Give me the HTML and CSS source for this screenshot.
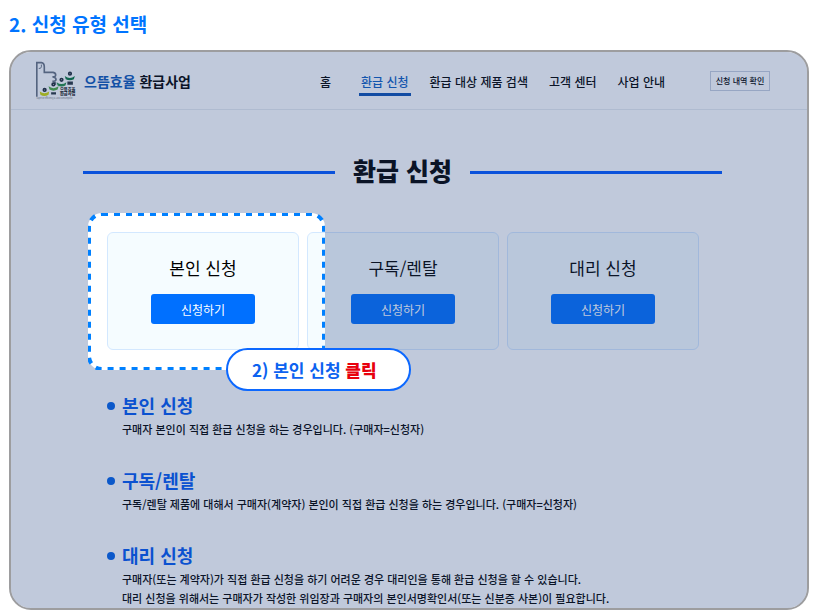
FILE: index.html
```html
<!DOCTYPE html>
<html lang="ko">
<head>
    <meta charset="UTF-8">
    <meta name="viewport" content="width=device-width, initial-scale=1.0">
    <title>신청 유형 선택</title>
    <link rel="stylesheet" href="styles.css">
</head>
<body>

    <h1 class="step-title">2. 신청 유형 선택</h1>

    <div class="screen">
        <header class="header">
            <a href="#" class="brand">
                <svg class="brand-logo" viewBox="18 18 122 120" aria-hidden="true">
                    <!-- Hand -->
                    <path d="M20 128V23H34Q43 24 43 36V53H70Q79 55 78 62Q77 67 68 67M70 67Q80 69 79 76Q77 81 68 80M72 81Q79 84 77 91" fill="none" stroke="#68717f" stroke-width="5"/>
                    <path d="M34 29V36Q33 42 26 41" fill="none" stroke="#68717f" stroke-width="3"/>
                    <!-- People -->
                    <path d="M29 112Q43 123 58 112L56 122Q43 130 31 122Z" fill="#d0d800"/>
                    <path d="M56 96Q71 107 87 96L84 106Q71 113 59 106Z" fill="#4ba63d"/>
                    <path d="M81 83Q96 95 111 83L108 93Q96 100 84 93Z" fill="#218b43"/>
                    <path d="M106 64Q122 76 137 64L134 74Q122 81 109 74Z" fill="#08743a"/>
                    <g fill="none" stroke="#202a35" stroke-width="5">
                        <circle cx="44" cy="107" r="4"/>
                        <circle cx="71" cy="90" r="4"/>
                        <circle cx="96" cy="76" r="4"/>
                        <circle cx="122" cy="57" r="4"/>
                    </g>
                    <path d="M64 114H79V121H64ZM114 81H131V91H114Z" fill="#28343c"/>
                    <text x="91" y="110" class="logo-name">으뜸효율</text>
                    <text x="91" y="124" class="logo-name">환급사업</text>
                    <text x="19" y="136" class="logo-caption">Superior Efficiency &amp; Low Consumption</text>
                </svg>
                <span class="brand-name"><em>으뜸효율</em> 환급사업</span>
            </a>
            <nav class="nav">
                <a href="#" class="home">홈</a>
                <a href="#" class="active">환급 신청</a>
                <a href="#">환급 대상 제품 검색</a>
                <a href="#">고객 센터</a>
                <a href="#">사업 안내</a>
            </nav>
            <button type="button" class="history-btn">신청 내역 확인</button>
        </header>

        <main class="main">
            <h2 class="page-title">환급 신청</h2>

            <div class="cards">
                <div class="card">
                    <h3>본인 신청</h3>
                    <button type="button">신청하기</button>
                </div>
                <div class="card">
                    <h3>구독/렌탈</h3>
                    <button type="button">신청하기</button>
                </div>
                <div class="card">
                    <h3>대리 신청</h3>
                    <button type="button">신청하기</button>
                </div>

                <!-- Spotlight on the first card, everything else is dimmed -->
                <div class="spotlight">
                    <svg aria-hidden="true"><rect class="dashes"/></svg>
                </div>
                <div class="callout">2) 본인 신청 <strong>클릭</strong></div>
            </div>

            <ul class="types">
                <li>
                    <h3>본인 신청</h3>
                    <p>구매자 본인이 직접 환급 신청을 하는 경우입니다. (구매자=신청자)</p>
                </li>
                <li>
                    <h3>구독/렌탈</h3>
                    <p>구독/렌탈 제품에 대해서 구매자(계약자) 본인이 직접 환급 신청을 하는 경우입니다. (구매자=신청자)</p>
                </li>
                <li>
                    <h3>대리 신청</h3>
                    <p>구매자(또는 계약자)가 직접 환급 신청을 하기 어려운 경우 대리인을 통해 환급 신청을 할 수 있습니다.<br>대리 신청을 위해서는 구매자가 작성한 위임장과 구매자의 본인서명확인서(또는 신분증 사본)이 필요합니다.</p>
                </li>
            </ul>
        </main>
    </div>

</body>
</html>
```
FILE: styles.css
```css
* {
    box-sizing: border-box;
}

body {
    margin: 0;
    padding: 9px 5px 5px 9px;
    background: #fff;
    color: #000;
    font-family: "Noto Sans CJK KR", "Noto Sans", sans-serif;
}

h1, h2, h3, p, ul {
    margin: 0;
    padding: 0;
}

a {
    color: inherit;
    text-decoration: none;
}

button {
    font-family: inherit;
    padding: 0;
    cursor: pointer;
}

.step-title {
    margin-bottom: 11px;
    font-size: 19px;
    line-height: 30px;
    font-weight: 700;
    color: #0074ff;
}

/* overflow keeps the dimming inside the rounded frame */
.screen {
    border: 2px solid #9d9d9f;
    border-radius: 22px;
    overflow: hidden;
}

/* Header */
.header {
    display: flex;
    align-items: center;
    height: 58px;
    padding: 0 37px 0 25px;
    border-bottom: 1px solid #e7ebf0;
}

.brand {
    display: flex;
    align-items: center;
    gap: 8px;
}

.brand-logo {
    width: 40px;
    height: 39px;
}

.logo-name {
    font-size: 13px;
    font-weight: 700;
}

.logo-caption {
    font-size: 6px;
    fill: #777;
}

.brand-name {
    font-size: 14px;
    font-weight: 700;
    white-space: nowrap;
}

.brand-name em {
    font-style: normal;
    color: #0b55b5;
}

.nav {
    display: flex;
    gap: 17px;
    margin-left: auto;
    font-size: 12px;
    line-height: 22px;
    font-weight: 500;
    white-space: nowrap;
}

.nav a {
    padding: 5px 2px 0;
    border-bottom: 3px solid transparent;
}

.nav .home {
    margin-right: 9px;
}

.nav .active {
    color: #0b5cc0;
    border-color: #0b50b0;
}

.history-btn {
    width: 60px;
    height: 20px;
    margin-left: 43px;
    background: none;
    border: 1px solid #c5cedd;
    font-size: 8px;
    font-weight: 500;
    white-space: nowrap;
}

/* Content */
.main {
    padding: 42px 85px 0 72px;
}

.page-title {
    display: flex;
    align-items: center;
    gap: 18px;
    font-size: 25px;
    line-height: 36px;
    font-weight: 900;
}

.page-title::before,
.page-title::after {
    content: "";
    flex: 1;
    height: 3px;
    margin-top: 4px;
    background: #0058ff;
}

.cards {
    position: relative;
    display: grid;
    grid-template-columns: repeat(3, 1fr);
    gap: 8px;
    margin: 44px 23px 0 24px;
}

.card {
    height: 118px;
    padding-top: 22px;
    border: 1px solid #d3e8ff;
    border-radius: 6px;
    background: #f5fcff;
    text-align: center;
}

.card h3 {
    font-size: 17px;
    line-height: 26px;
    font-weight: 400;
}

.card button {
    width: 104px;
    height: 30px;
    margin-top: 13px;
    border: 0;
    border-radius: 3px;
    background: #0070ff;
    color: #fff;
    font-size: 12px;
}

.spotlight {
    position: absolute;
    top: -19px;
    left: -19px;
    width: 237px;
    height: 157px;
    border-radius: 14px;
    box-shadow: 0 0 0 2000px rgba(37, 68, 130, 0.29);
    pointer-events: none;
}

.spotlight svg {
    display: block;
    width: 100%;
    height: 100%;
}

.dashes {
    x: 1px;
    y: 1px;
    width: calc(100% - 2px);
    height: calc(100% - 2px);
    rx: 13px;
    fill: none;
    stroke: #0080ff;
    stroke-width: 4;
    stroke-dasharray: 6 6;
}

.callout {
    position: absolute;
    top: 116px;
    left: 119px;
    width: 185px;
    border: 2px solid #0c68ff;
    border-radius: 22px;
    background: #fff;
    padding-left: 24px;
    font-size: 17px;
    line-height: 39px;
    font-weight: 700;
    color: #0c62f0;
}

.callout strong {
    color: #e8000d;
}

.types {
    display: flex;
    flex-direction: column;
    gap: 29px;
    margin: 43px 0 0 24px;
    list-style: none;
}

.types li {
    padding-left: 15px;
}

.types h3 {
    display: flex;
    align-items: center;
    margin: 0 0 3px -15px;
    font-size: 18px;
    line-height: 24px;
    font-weight: 700;
    color: #0057f0;
}

.types h3::before {
    content: "";
    width: 8px;
    height: 8px;
    margin: 2px 7px 0 0;
    border-radius: 50%;
    background: #0060e8;
}

.types p {
    font-size: 11px;
    line-height: 19px;
    font-weight: 500;
}
```
